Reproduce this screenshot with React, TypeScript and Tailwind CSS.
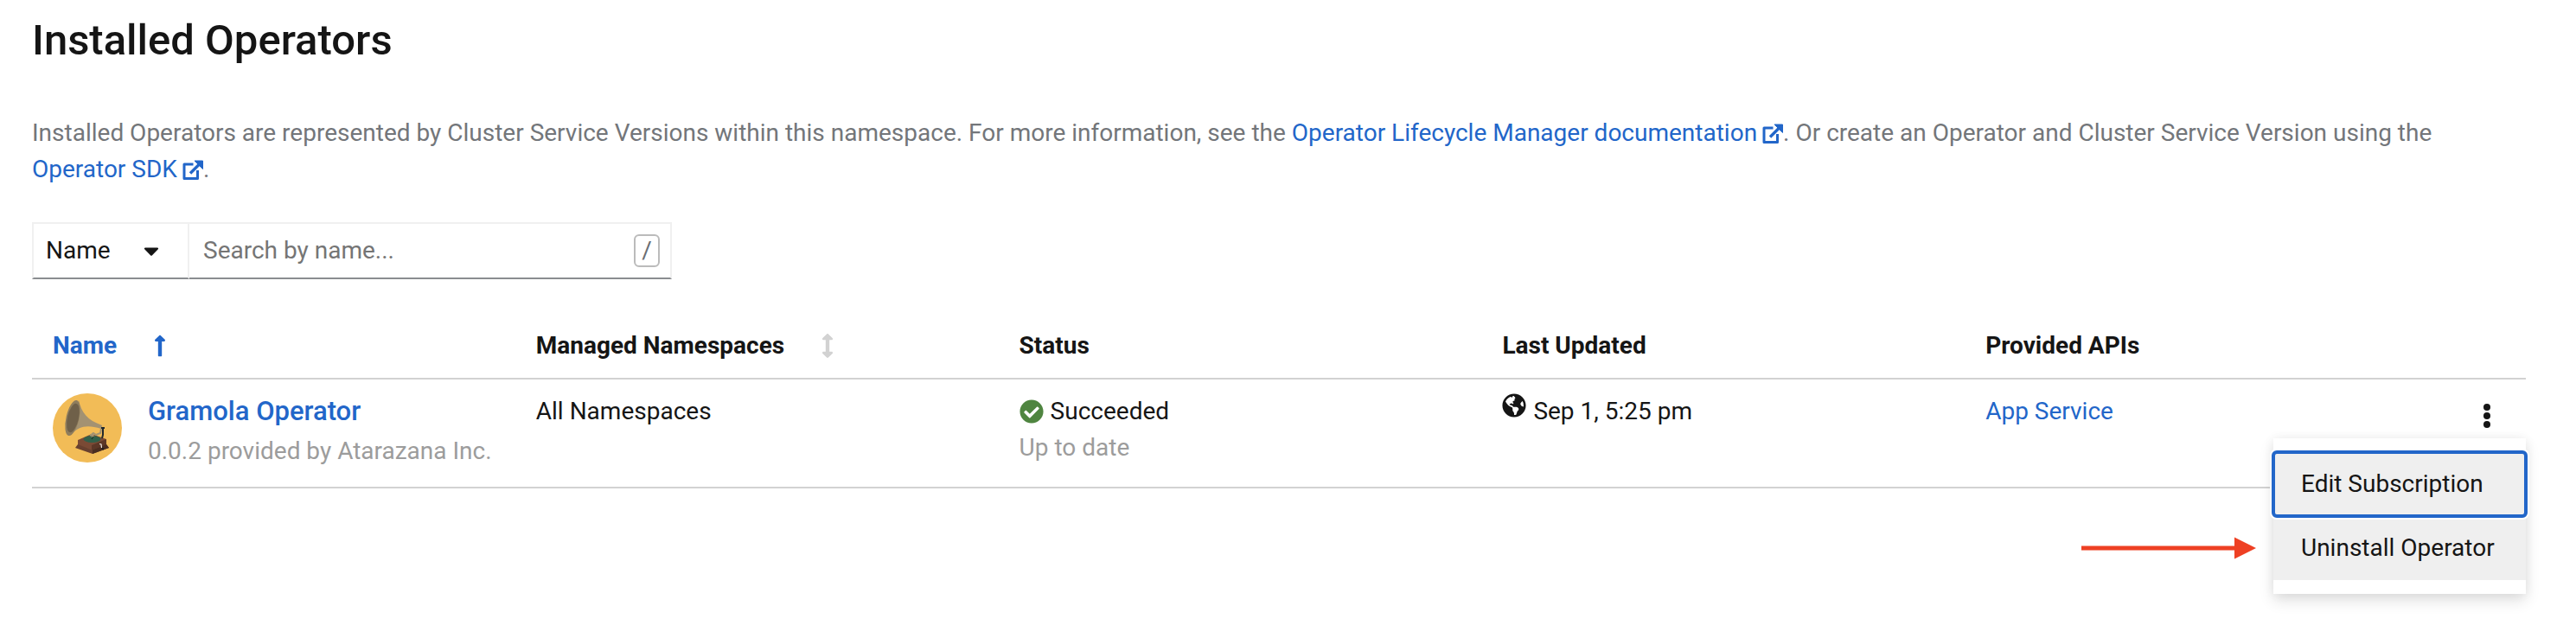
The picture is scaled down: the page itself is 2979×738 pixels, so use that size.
import { FaArrowsAltV, FaCaretDown, FaCheckCircle, FaGlobeAmericas, FaLongArrowAltUp } from "react-icons/fa";

function ExternalLinkIcon() {
  return (
    <svg viewBox="0 0 24 24" className="ml-1.5 inline-block size-6 align-[-4px]" fill="none" stroke="currentColor" aria-hidden="true">
      <path d="M12.500 5H2V21.500H17.500V12" strokeWidth="3" strokeLinejoin="round" />
      <path d="M9 15.500L20 4.500" strokeWidth="3.400" />
      <path d="M14 1H23.500V10.500Z" fill="currentColor" stroke="currentColor" strokeLinejoin="round" />
    </svg>
  );
}

function GramophoneLogo() {
  return (
    <svg viewBox="0 0 80 80" className="size-20 shrink-0" aria-hidden="true">
      <circle cx="40" cy="40" r="40" fill="#f2bc57" />
      <path d="M30 8C33 22 40 31 57 37L56 41C40 36 30 38 22 47Z" fill="#a39272" />
      <ellipse cx="23" cy="28.500" rx="7.500" ry="21" transform="rotate(13 23 28.500)" fill="#8f7d5d" />
      <ellipse cx="23.500" cy="28.500" rx="6.500" ry="17" transform="rotate(13 23.500 28.500)" fill="#6f6049" />
      <path d="M29 54L45 47L62 53V61L45 67L29 61Z" fill="#7a4a35" />
      <path d="M45 60L62 53V61L45 67Z" fill="#5c3727" />
      <path d="M29 59L45 65.500L62 59L65 63L46 70L26 63Z" fill="#68402f" />
      <path d="M46 65.500L62 59L65 63L46 70Z" fill="#4a2d20" />
      <ellipse cx="45.500" cy="53" rx="10" ry="4" fill="#31604a" />
      <path d="M43 49L47 46L50 48L55 46L56 41" fill="none" stroke="#a39272" strokeWidth="2" />
      <path d="M44 48L47 47L48 50L45 51Z" fill="#a39272" />
      <path d="M45 53L47 50" stroke="#173528" strokeWidth="1.200" />
      <path d="M56 40H60M58 40V48L57 52" fill="none" stroke="#20282c" strokeWidth="2" />
      <path d="M54 58.500L56 59L56.500 63" fill="none" stroke="#f4efe8" strokeWidth="1.200" />
      <path d="M57 63L59 65" stroke="#16191b" strokeWidth="1.500" />
    </svg>
  );
}

const link = "text-[#2266c9]";
const headCell = "px-6 pb-4 text-left font-bold whitespace-nowrap";
const bodyCell = "px-6 pt-3 pb-5 align-top";

export default function App() {
  return (
    <main className="min-h-screen bg-white pr-[58px] pb-12 pl-[37px] font-[Roboto,sans-serif] text-[28px] leading-[42px] text-[#151515]">
      <h1 className="pt-[17px] text-[49px] leading-[60px] font-medium">Installed Operators</h1>

      <p className="mt-14 text-[#73767a]">
        Installed Operators are represented by Cluster Service Versions within this namespace. For more information, see the{" "}
        <a href="#olm" className={link}>Operator Lifecycle Manager documentation<ExternalLinkIcon /></a>. Or create an Operator
        and Cluster Service Version using the <a href="#sdk" className={link}>Operator SDK<ExternalLinkIcon /></a>.
      </p>

      <div className="mt-10 flex h-[66px] w-[740px] items-stretch">
        <div className="grid w-[182px] items-center border-2 border-[#f0f0f0] border-b-[#8a8d90]">
          <select aria-label="Filter by" className="col-start-1 row-start-1 h-full w-full appearance-none bg-transparent pl-3.5 outline-none">
            <option>Name</option>
          </select>
          <FaCaretDown className="pointer-events-none col-start-1 row-start-1 mr-7 size-7 justify-self-end" />
        </div>
        <div className="flex flex-1 items-center border-2 border-l-0 border-[#f0f0f0] border-b-[#8a8d90] pr-3 pl-4">
          <input type="text" aria-label="Search by name" placeholder="Search by name..." className="min-w-0 flex-1 outline-none placeholder:text-[#757575]" />
          <kbd className="flex h-[38px] w-[30px] items-center justify-center rounded-md border-2 border-[#bbb] font-[Roboto,sans-serif] text-[#6a6e73]">/</kbd>
        </div>
      </div>

      <table className="mt-14 w-full table-fixed border-collapse">
        <colgroup>
          <col /><col /><col /><col /><col /><col className="w-[90px]" />
        </colgroup>
        <thead>
          <tr className="border-b-2 border-[#d2d2d2]">
            <th className={headCell} aria-sort="ascending">
              <button type="button" className="flex items-center gap-9 text-[#2266c9]">
                Name <FaLongArrowAltUp className="size-7" />
              </button>
            </th>
            <th className={headCell}>
              <button type="button" className="flex items-center gap-9">
                Managed Namespaces <FaArrowsAltV className="size-7 text-[#d2d2d2]" />
              </button>
            </th>
            <th className={headCell}>Status</th>
            <th className={headCell}>Last Updated</th>
            <th className={headCell}>Provided APIs</th>
            <th aria-label="Actions" />
          </tr>
        </thead>
        <tbody>
          <tr className="border-b-2 border-[#d2d2d2]">
            <td className={bodyCell}>
              <div className="flex items-start gap-[30px]">
                <div className="pt-1"><GramophoneLogo /></div>
                <div className="pt-1">
                  <a href="#gramola" className="block text-[31px] leading-[42px] font-medium text-[#2266c9]">Gramola Operator</a>
                  <div className="pt-1 text-[#9c9c9c]">0.0.2 provided by Atarazana Inc.</div>
                </div>
              </div>
            </td>
            <td className={bodyCell}><div className="pt-1">All Namespaces</div></td>
            <td className={bodyCell}>
              <div className="flex items-center gap-2 pt-1"><FaCheckCircle className="size-7 text-[#4f8540]" />Succeeded</div>
              <div className="text-[#9c9c9c]">Up to date</div>
            </td>
            <td className={bodyCell}>
              <div className="flex items-start gap-2 pt-1"><FaGlobeAmericas className="size-7" />Sep 1, 5:25 pm</div>
            </td>
            <td className={bodyCell}><div className="pt-1"><a href="#app-service" className={link}>App Service</a></div></td>
            <td className="pt-6 align-top">
              <div className="relative">
                <button type="button" aria-label="Actions" aria-expanded="true" className="mx-auto flex h-9 w-10 flex-col items-center gap-0.5 pt-1">
                  <span className="size-2 rounded-full bg-[#151515]" />
                  <span className="size-2 rounded-full bg-[#151515]" />
                  <span className="size-2 rounded-full bg-[#151515]" />
                </button>
                <div className="absolute top-full right-0 z-10 mt-2 flex w-[292px] flex-col bg-white py-4 shadow-[0_8px_16px_rgba(3,3,3,0.12),0_0_12px_rgba(3,3,3,0.06)]">
                  <button type="button" className="relative z-10 bg-[#efefef] px-8 py-4 text-left whitespace-nowrap">
                    Edit Subscription
                    <span className="pointer-events-none absolute -inset-0.5 rounded-md border-4 border-[#2266c9] ring-2 ring-white" />
                  </button>
                  <button type="button" className="relative bg-[#efefef] px-8 py-4 text-left whitespace-nowrap">
                    Uninstall Operator
                    <svg viewBox="0 0 202 26" className="absolute top-6 right-full mr-5 h-[26px] w-[202px]" aria-hidden="true">
                      <path d="M0 10.500H177V0.500L202 13L177 25.500V15.500H0Z" fill="#ee4023" />
                    </svg>
                  </button>
                </div>
              </div>
            </td>
          </tr>
        </tbody>
      </table>
    </main>
  );
}
